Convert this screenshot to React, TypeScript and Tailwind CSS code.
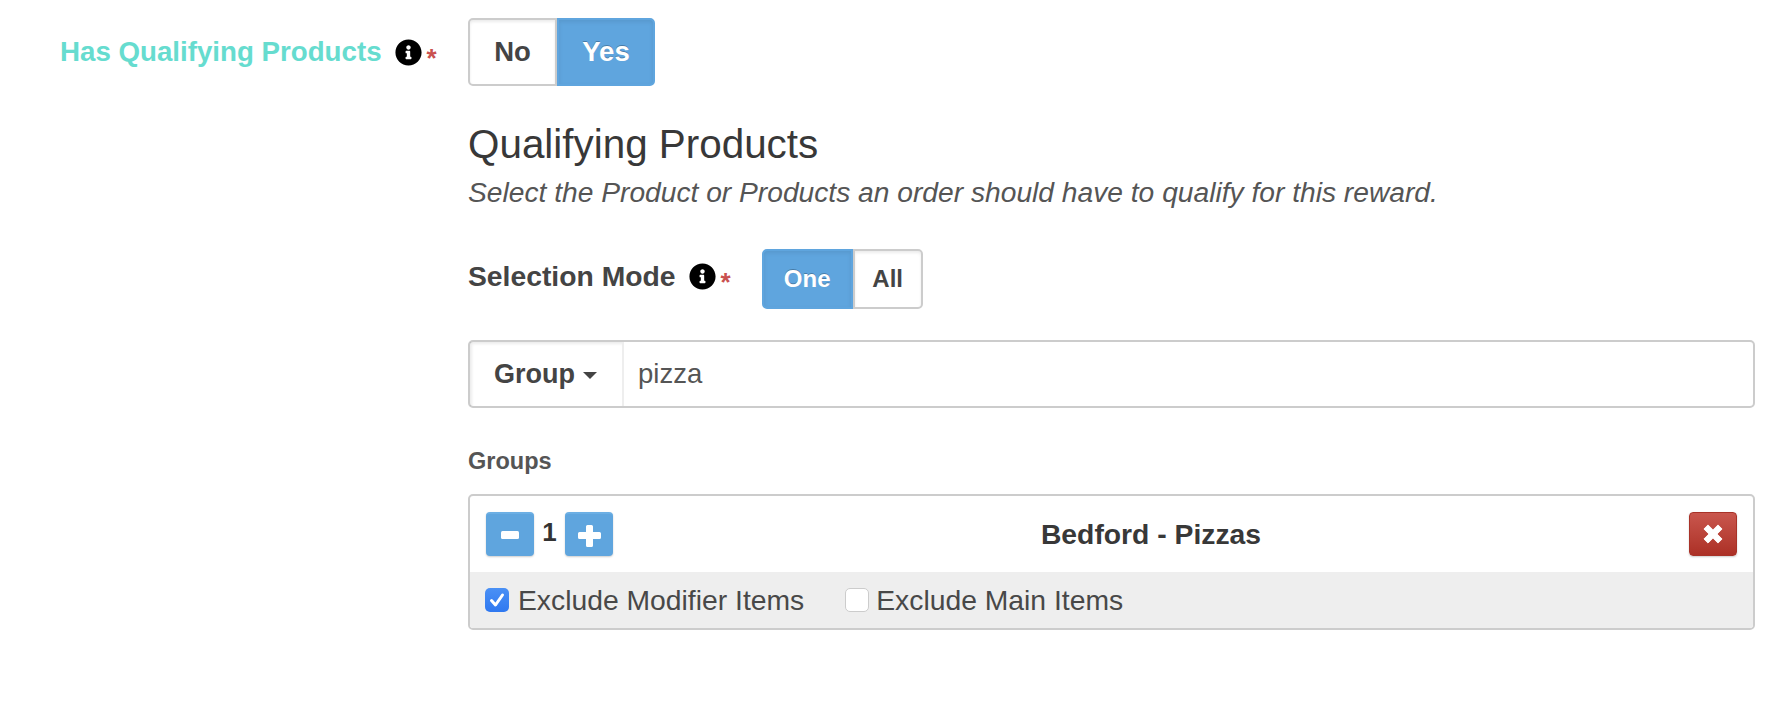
import { FaInfoCircle } from "react-icons/fa";

function Req() {
  return (
    <span className="flex items-start h-[27px]">
      <FaInfoCircle className="text-black" size={27} />
      <span className="ml-[5px] mt-[7px] text-[#c9514f] text-[26px] leading-[24px] font-bold">*</span>
    </span>
  );
}

function Seg({ label, active, cls }: { label: string; active?: boolean; cls: string }) {
  return (
    <div
      className={`flex items-center justify-center font-bold ${cls} ${
        active
          ? "bg-[#5fa5de] text-white border-2 border-[#5fa5de] shadow-[inset_0_2px_4px_rgba(0,0,0,0.08)] [text-shadow:0_-1px_0_rgba(0,0,0,0.25)]"
          : "bg-white text-[#444] border-2 border-[#ccc] shadow-[inset_0_2px_3px_rgba(0,0,0,0.08)]"
      }`}
    >
      {label}
    </div>
  );
}

function BlueBtn({ children }: { children: React.ReactNode }) {
  return (
    <div className="w-[48px] h-[44px] rounded-[4px] bg-[#5fa5de] border-t-2 border-[#6cafe4] shadow-[0_1px_2px_rgba(0,0,0,0.2)] flex items-center justify-center">
      {children}
    </div>
  );
}

export default function App() {
  return (
    <div className="w-[1776px] h-[726px] bg-white flex font-['Liberation_Sans',Arial,sans-serif] text-[#333] overflow-hidden">
      <div className="w-[468px] shrink-0 pl-[60px] pt-[18px]">
        <div className="h-[68px] flex items-center">
          <span className="text-[#66dccf] font-bold text-[27.7px]">Has Qualifying Products</span>
          <span className="ml-[13px]">
            <Req />
          </span>
        </div>
      </div>
      <div className="w-[1287px] shrink-0 pt-[18px]">
        <div className="flex h-[68px] text-[27.5px]">
          <Seg label="No" cls="w-[89px] rounded-l-[5px]" />
          <Seg label="Yes" active cls="w-[98px] rounded-r-[5px]" />
        </div>
        <h2 className="mt-[36px] text-[40.4px] leading-[44px] font-normal text-[#383838]">Qualifying Products</h2>
        <p className="mt-[8px] text-[28.2px] leading-[36px] italic text-[#555]">
          Select the Product or Products an order should have to qualify for this reward.
        </p>
        <div className="mt-[39px] flex items-center h-[60px]">
          <span className="font-bold text-[28.3px] text-[#444] -mt-[6px]">Selection Mode</span>
          <span className="ml-[13px] -mt-[6px]">
            <Req />
          </span>
          <div className="flex h-[60px] ml-[31px] text-[24px]">
            <Seg label="One" active cls="w-[91px] rounded-l-[5px]" />
            <Seg label="All" cls="w-[70px] rounded-r-[5px]" />
          </div>
        </div>
        <div className="mt-[31px] h-[68px] flex border-2 border-[#ccc] rounded-[5px]">
          <div className="w-[154px] shrink-0 flex items-center pl-[24px] border-r-2 border-[#eee] font-bold text-[27px] text-[#444] shadow-[inset_2px_2px_3px_rgba(0,0,0,0.08)]">
            Group
            <span className="ml-[8px] mt-[3px] w-0 h-0 border-x-[7px] border-x-transparent border-t-[7px] border-t-[#444]" />
          </div>
          <div className="flex-1 flex items-center pl-[14px] text-[27.5px] text-[#555]">pizza</div>
        </div>
        <div className="mt-[42px] h-[24px] flex items-center font-bold text-[23.5px] text-[#555]">Groups</div>
        <div className="mt-[20px] h-[136px] border-2 border-[#ccc] rounded-[5px] flex flex-col overflow-hidden">
          <div className="h-[76px] shrink-0 flex items-start pt-[16px] pl-[16px] pr-[16px]">
            <BlueBtn>
              <svg width="18" height="8" viewBox="0 0 18 8">
                <rect width="18" height="8" rx="1.5" fill="#fff" />
              </svg>
            </BlueBtn>
            <span className="w-[31px] text-center font-bold text-[26px] leading-[40px] text-[#333]">1</span>
            <BlueBtn>
              <svg width="23" height="23" viewBox="0 0 23 23">
                <path d="M8 2.5a1.5 1.5 0 0 1 1.5-1.5h4a1.5 1.5 0 0 1 1.5 1.5V8h6.5A1.5 1.5 0 0 1 23 9.5v4a1.5 1.5 0 0 1-1.5 1.5H15v6.5a1.5 1.5 0 0 1-1.5 1.5h-4A1.5 1.5 0 0 1 8 21.5V15H1.5A1.5 1.5 0 0 1 0 13.5v-4A1.5 1.5 0 0 1 1.5 8H8z" fill="#fff" />
              </svg>
            </BlueBtn>
            <div className="flex-1 text-center font-bold text-[28.3px] leading-[44px] text-[#383838]">Bedford - Pizzas</div>
            <div className="w-[48px] h-[44px] rounded-[4px] bg-gradient-to-b from-[#c9564d] to-[#ac3026] border border-[#a83228] shadow-[0_1px_2px_rgba(0,0,0,0.2)] flex items-center justify-center">
              <svg width="20" height="20" viewBox="0 0 22 22">
                <path d="M5.5 1 L11 6.5 L16.5 1 L21 5.5 L15.5 11 L21 16.5 L16.5 21 L11 15.5 L5.5 21 L1 16.5 L6.5 11 L1 5.5 Z" fill="#fff" stroke="#fff" strokeWidth="1" strokeLinejoin="round" />
              </svg>
            </div>
          </div>
          <div className="flex-1 bg-[#eee] flex items-center pl-[15px] text-[28.3px] text-[#484848]">
            <span className="w-[24px] h-[24px] rounded-[5px] bg-gradient-to-b from-[#4a90f5] to-[#2f78f0] flex items-center justify-center">
              <svg width="18" height="18" viewBox="0 0 18 18" fill="none">
                <path d="M3.5 9.5 L7.5 14 L14.5 4" stroke="#fff" strokeWidth="3" strokeLinecap="round" strokeLinejoin="round" />
              </svg>
            </span>
            <span className="ml-[9px]">Exclude Modifier Items</span>
            <span className="ml-[41px] w-[24px] h-[24px] rounded-[5px] bg-white border border-[#ccc]" />
            <span className="ml-[7px]">Exclude Main Items</span>
          </div>
        </div>
      </div>
    </div>
  );
}
